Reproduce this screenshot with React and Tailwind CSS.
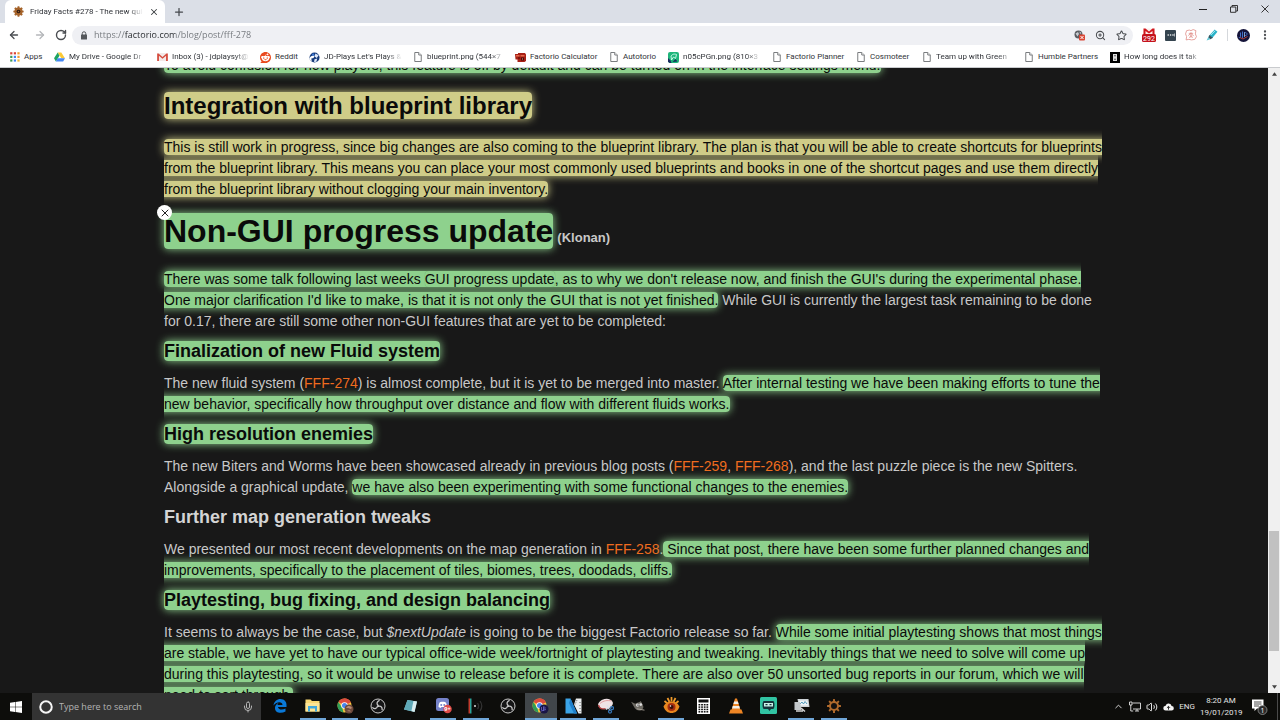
import React from 'react';
import { ArrowLeft, ArrowRight, RotateCw, ZoomIn, Star, Plus, X, MoreVertical, Mic, ChevronUp, Volume2 } from 'lucide-react';
import { SiReddit } from 'react-icons/si';

const CHROME_FONT = "font-['Open_Sans','Noto_Sans',sans-serif]";

function Gear({ className = 'size-3', color = '#a5632a' }) {
  return (
    <svg viewBox="0 0 24 24" className={className} aria-hidden="true">
      <g fill={color}>
        {[0, 45, 90, 135].map((a) => (
          <rect key={a} x="9.8" y="0.8" width="4.4" height="22.4" rx="1" transform={`rotate(${a} 12 12)`} />
        ))}
      </g>
      <circle cx="12" cy="12" r="6.6" fill="none" stroke={color} strokeWidth="4" />
      <circle cx="12" cy="12" r="4" fill="#2a1a12" />
      <circle cx="12" cy="12" r="1.6" fill={color} />
    </svg>
  );
}

function AppsIcon() {
  const colors = ['#db4437', '#db4437', '#f29b34', '#3c9a55', '#4285f4', '#f29b34', '#3c9a55', '#4285f4', '#f2b634'];
  return (
    <svg viewBox="0 0 10 10" className="size-2.5">
      {colors.map((c, i) => (
        <rect key={i} x={(i % 3) * 3.6 + 0.2} y={Math.floor(i / 3) * 3.6 + 0.2} width="2.2" height="2.2" fill={c} />
      ))}
    </svg>
  );
}

function DriveIcon() {
  return (
    <svg viewBox="0 0 24 22" className="w-[11px] h-2.5">
      <path d="M8 1h8l8 13h-8z" fill="#fcc934" />
      <path d="M8 1l4 7L4 21 0 14z" fill="#1ea362" />
      <path d="M8 14h16l-4 7H4z" fill="#4587f4" />
    </svg>
  );
}

function MailIcon() {
  return (
    <svg viewBox="0 0 24 18" className="w-[11px] h-2">
      <rect x="1" y="0" width="22" height="18" rx="1" fill="#f3e9e8" />
      <path d="M0 18V1h3l9 8 9-8h3v17h-4V6l-8 7-8-7v12z" fill="#d54b3d" />
    </svg>
  );
}

function GlobeSwirl() {
  return (
    <svg viewBox="0 0 24 24" className="size-[11px]">
      <circle cx="12" cy="12" r="11" fill="#163a7a" />
      <path d="M1 13c4-5 8-6 11-5l-2 5-5 1 1 6c-3-1-5-4-5-7z" fill="#fff" />
      <path d="M14 3l7 4-4 6-5-3zM12 16l6-2-2 7-5 1z" fill="#dfe9fa" />
      <circle cx="9" cy="6" r="2.5" fill="#3d7bd9" />
    </svg>
  );
}

function PageIcon() {
  return (
    <svg viewBox="0 0 16 20" className="w-2 h-2.5" fill="#fff" stroke="#6b6e72" strokeWidth="1.8">
      <path d="M1.5 1h8L14.5 6v13h-13z" />
      <path d="M9.5 1v5h5" />
    </svg>
  );
}

function CalcIcon() {
  return (
    <svg viewBox="0 0 22 18" className="w-[11px] h-[9px]">
      <path d="M0 2h6V0h14l2 3v13l-3 2H5v-5H1z" fill="#a82015" />
      <path d="M2 4h7v3H2zM11 4h8v3h-8z" fill="#e56a4d" />
      <path d="M6 9h4v2H6zM12 9h6v6h-6z" fill="#4a0b08" />
      <path d="M14 11h2v2h-2z" fill="#e98" />
    </svg>
  );
}

function GreenPicIcon() {
  return (
    <svg viewBox="0 0 22 22" className="size-[11px]">
      <rect width="22" height="22" rx="4" fill="#1fb57a" />
      <path d="M0 12l5 5 2 5H3l-3-3z" fill="#1b2a60" />
      <path d="M6 8c4-5 8-4 11-3l-2 8-4-3-4 6z" fill="none" stroke="#d4fff0" strokeWidth="1.8" />
      <path d="M9 20l6-6 4 5z" fill="#14305a" />
    </svg>
  );
}

function BlackIcon() {
  return (
    <svg viewBox="0 0 20 22" className="w-2.5 h-[11px]">
      <rect width="20" height="22" fill="#000" />
      <path d="M6 4h8v14H6z" fill="#ddd" />
      <path d="M8 6h4l-2 4zM8 16h4l-2-4z" fill="#555" />
    </svg>
  );
}

const bookmarks = [
  { label: 'Apps', icon: <AppsIcon />, width: 'w-[45px]' },
  { label: 'My Drive - Google Dr', icon: <DriveIcon />, width: 'w-[103px]', fade: true },
  { label: 'Inbox (3) - jdplaysyt@', icon: <MailIcon />, width: 'w-[103px]', fade: true },
  { label: 'Reddit', icon: <SiReddit className="size-[11px] text-[#ea4a1f]" />, width: 'w-[49px]' },
  { label: "JD-Plays Let's Plays &", icon: <GlobeSwirl />, width: 'w-[103px]', fade: true },
  { label: 'blueprint.png (544×7', icon: <PageIcon />, width: 'w-[103px]', fade: true },
  { label: 'Factorio Calculator', icon: <CalcIcon />, width: 'w-[93px]' },
  { label: 'Autotorio', icon: <PageIcon />, width: 'w-[60px]' },
  { label: 'n05cPGn.png (810×3', icon: <GreenPicIcon />, width: 'w-[103px]', fade: true },
  { label: 'Factorio Planner', icon: <PageIcon />, width: 'w-[84px]' },
  { label: 'Cosmoteer', icon: <PageIcon />, width: 'w-[66px]' },
  { label: 'Team up with Green', icon: <PageIcon />, width: 'w-[102px]', fade: true },
  { label: 'Humble Partners', icon: <PageIcon />, width: 'w-[86px]' },
  { label: 'How long does it tak', icon: <BlackIcon />, width: 'w-[103px]', fade: true },
];

function TabStrip() {
  return (
    <div className="flex h-[23px] shrink-0 items-stretch bg-[#dbdfe7]">
      <div className="ml-[5px] flex w-40 items-center gap-1.5 rounded-t-md bg-white pl-2 pr-1.5">
        <Gear className="size-[11px] shrink-0" />
        <span className="min-w-0 flex-1 whitespace-nowrap mask-r-from-88% font-['Roboto','Noto_Sans',sans-serif] text-[8px] leading-4 text-[#303338]">
          Friday Facts #278 - The new quic
        </span>
        <button aria-label="Close tab" className="text-[#3c4043]"><X className="size-2.5" strokeWidth={2.5} /></button>
      </div>
      <button aria-label="New tab" className="ml-2 self-center text-[#45484d]"><Plus className="size-3" strokeWidth={2.5} /></button>
      <div className="ml-auto flex h-[18px] text-[#222]">
        <button aria-label="Minimize" className="grid w-[31px] place-items-center">
          <svg viewBox="0 0 8 8" className="size-2"><path d="M0 4.500h8" stroke="currentColor" /></svg>
        </button>
        <button aria-label="Restore" className="grid w-[31px] place-items-center">
          <svg viewBox="0 0 8 8" className="size-2" fill="none" stroke="currentColor" strokeWidth="0.9"><path d="M.5 2h5.300v5.300H.5zM2 2V.5h5.500V6H6" /></svg>
        </button>
        <button aria-label="Close" className="grid w-[31px] place-items-center">
          <svg viewBox="0 0 8 8" className="size-2" fill="none" stroke="currentColor" strokeWidth="0.9"><path d="M.5.5l7 7M7.500.5l-7 7" /></svg>
        </button>
      </div>
    </div>
  );
}

function Toolbar() {
  return (
    <div className="flex h-6 shrink-0 items-center bg-white pl-2 text-[#4a4d51]">
      <button aria-label="Back" className="grid w-[21px] justify-start"><ArrowLeft className="size-3" strokeWidth={2.6} /></button>
      <button aria-label="Forward" className="grid w-[21px] justify-center text-[#b5b7ba]"><ArrowRight className="size-3" strokeWidth={2.6} /></button>
      <button aria-label="Reload" className="grid w-[22px] justify-center"><RotateCw className="size-3" strokeWidth={2.8} /></button>
      <div className="flex h-[19px] flex-1 items-center rounded-full bg-[#eff0f4] pl-2 pr-1.5">
        <svg viewBox="0 0 16 18" className="h-[9px] w-2"><rect x="2" y="7" width="12" height="10" rx="1" fill="#55585c" /><path d="M4.500 8V5a3.500 3.500 0 0 1 7 0v3" fill="none" stroke="#55585c" strokeWidth="2" /></svg>
        <input
          aria-label="Address"
          defaultValue="https://factorio.com/blog/post/fff-278"
          className="ml-1.5 min-w-0 flex-1 bg-[linear-gradient(90deg,#72767b_31px,#25282c_31px,#25282c_81px,#72767b_81px)] bg-clip-text text-[9px] leading-4 text-transparent outline-none"
        />
        <div className="flex items-center gap-[10px]">
          <button aria-label="Blocked content">
            <svg viewBox="0 0 22 22" className="size-[11px]">
              <circle cx="9" cy="9" r="8" fill="#5a5d62" />
              <path d="M3 7l5-3 2 4-3 5zM11 3l4 3-3 2z" fill="#c9ccd1" />
              <rect x="10" y="9" width="12" height="12" rx="2" fill="#db4634" />
              <path d="M13 12l6 6m0-6l-6 6" stroke="#fff" strokeWidth="2" />
            </svg>
          </button>
          <button aria-label="Zoom"><ZoomIn className="size-[11px]" strokeWidth={2.2} /></button>
          <button aria-label="Bookmark this page"><Star className="size-[11px]" strokeWidth={2.2} /></button>
        </div>
      </div>
      <div className="flex w-[147px] items-center justify-between px-[9px]">
        <button aria-label="Mail, 292 unread">
          <svg viewBox="0 0 28 28" className="size-3.5">
            <path d="M3 1h22v12H3z" fill="#fbeceb" />
            <path d="M3 1h4l7 6 7-6h4v12h-4V6l-7 5-7-5v7H3z" fill="#d0161d" />
            <rect x="0" y="12" width="28" height="16" rx="3" fill="#c4121b" />
            <text x="14" y="25" fontSize="14" fill="#fff" textAnchor="middle" fontFamily="Roboto">292</text>
          </svg>
        </button>
        <button aria-label="Password manager" className="grid size-[11px] place-items-center rounded-[1px] bg-[#35444f]">
          <svg viewBox="0 0 20 8" className="h-1 w-2" fill="#fff"><circle cx="3" cy="4" r="2" /><circle cx="9" cy="4" r="2" /><circle cx="15" cy="4" r="2" /><path d="M18 0h1.500v8H18z" /></svg>
        </button>
        <button aria-label="Stamp">
          <svg viewBox="0 0 22 22" className="size-3" fill="none" stroke="#e08f89" strokeWidth="1.500"><path d="M3 3l5-1 3 1 4-2 5 2-1 6 2 5-3 5-6 1-5-1-5 1 1-6-2-5z" /><path d="M7 8h8M6 12l5-4 5 5M8 16l3-4 3 4M11 6v10" /></svg>
        </button>
        <button aria-label="Highlighter">
          <svg viewBox="0 0 22 22" className="size-3"><path d="M6 12L16 1l5 4-9 11z" fill="#2bb3c9" /><path d="M6 11l7 5-5 3-4-3z" fill="#35545f" /><path d="M4 15l4 4-7 2z" fill="#5fc8d6" /><path d="M9 11l8-8" stroke="#c9f4fa" strokeWidth="1.500" /></svg>
        </button>
        <span className="h-3 w-px bg-[#d5d8dc]" />
        <button aria-label="Profile">
          <svg viewBox="0 0 26 26" className="size-[13px]"><circle cx="13" cy="13" r="13" fill="#15143a" /><path d="M7 7v8c0 3-3 3-3 1M11 5v13M14 7c8-1 8 7 1 6" fill="none" stroke="#4a7bd8" strokeWidth="1.800" /><path d="M6 17l6 3 9-5" stroke="#c5483f" strokeWidth="1.800" fill="none" /><path d="M15 7v9" stroke="#a9c8e8" strokeWidth="1.500" /></svg>
        </button>
        <button aria-label="Menu"><MoreVertical className="size-3" strokeWidth={2.6} /></button>
      </div>
    </div>
  );
}

function BookmarksBar() {
  return (
    <nav aria-label="Bookmarks" className="flex h-[21px] shrink-0 items-center overflow-hidden border-b border-[#c9cbce] bg-white pl-[9px]">
      {bookmarks.map((b) => (
        <a key={b.label} href="#" className={`flex shrink-0 items-center gap-1 pr-2.5 ${b.width}`}>
          <span className="grid w-[11px] shrink-0 place-items-center">{b.icon}</span>
          <span className={`min-w-0 flex-1 whitespace-nowrap font-['Roboto','Noto_Sans',sans-serif] text-[8px] leading-4 text-[#303338] ${b.fade ? 'mask-r-from-80%' : ''}`}>{b.label}</span>
        </a>
      ))}
    </nav>
  );
}

function Mark({ tone = 'green', children }) {
  const tones = {
    green: 'bg-[#8ed18d] shadow-[0_0_8px_#8ed18d]',
    yellow: 'bg-[#cfcc88] shadow-[0_0_8px_#cfcc88]',
  };
  return <mark className={`rounded-[4px] text-[#0a0a0a] ${tones[tone]}`}>{children}</mark>;
}

function PostLink({ children }) {
  return <a href="#" className="text-[#ef6c1f]">{children}</a>;
}

function Section({ title, marked = true, children }) {
  return (
    <section className="mt-[7px]">
      <h3 className="mb-2.5 text-[18px] font-bold leading-6 text-[#d4d4d4]">{marked ? <Mark>{title}</Mark> : title}</h3>
      <p>{children}</p>
    </section>
  );
}

function Article() {
  return (
    <article className="mx-auto -mt-[13px] max-w-[940px] font-['Liberation_Sans',Arial,sans-serif] text-[14px] leading-[21px] text-[#c8c8c8]">
      <p><Mark>To avoid confusion for new players, this feature is off by default and can be turned on in the interface settings menu.</Mark></p>
      <h2 className="mb-4 mt-[15px] text-[24px] font-bold leading-[30px]"><Mark tone="yellow">Integration with blueprint library</Mark></h2>
      <p>
        <Mark tone="yellow">
          This is still work in progress, since big changes are also coming to the blueprint library. The plan is that you will be able to create shortcuts for blueprints from the blueprint library. This means you can place your most commonly used blueprints and books in one of the shortcut pages and use them directly from the blueprint library without clogging your main inventory.
        </Mark>
      </p>
      <div className="mb-5 mt-[13px] flex items-baseline gap-1">
        <h1 className="relative text-[32px] font-bold leading-9">
          <Mark>Non-GUI progress update</Mark>
          <button aria-label="Remove highlight" className="absolute -left-[7px] -top-2 grid size-[15px] place-items-center rounded-full bg-white text-[#222]">
            <X className="size-3" strokeWidth={2} />
          </button>
        </h1>
        <span className="text-[13px] font-bold">(Klonan)</span>
      </div>
      <p>
        <Mark>
          There was some talk following last weeks <a href="#" className="rounded-[4px] shadow-[0_0_1px_#5f9f5e]">GUI progress update</a>, as to why we don't release now, and finish the GUI's during the experimental phase. One major clarification I'd like to make, is that it is not only the GUI that is not yet finished.
        </Mark>{' '}
        While GUI is currently the largest task remaining to be done for 0.17, there are still some other non-GUI features that are yet to be completed:
      </p>
      <Section title="Finalization of new Fluid system">
        The new fluid system (<PostLink>FFF-274</PostLink>) is almost complete, but it is yet to be merged into master.{' '}
        <Mark>After internal testing we have been making efforts to tune the new behavior, specifically how throughput over distance and flow with different fluids works.</Mark>
      </Section>
      <Section title="High resolution enemies">
        The new Biters and Worms have been showcased already in previous blog posts (<PostLink>FFF-259</PostLink>, <PostLink>FFF-268</PostLink>), and the last puzzle piece is the new Spitters. Alongside a graphical update,{' '}
        <Mark>we have also been experimenting with some functional changes to the enemies.</Mark>
      </Section>
      <Section title="Further map generation tweaks" marked={false}>
        We presented our most recent developments on the map generation in <PostLink>FFF-258</PostLink>.
        <Mark> Since that post, there have been some further planned changes and improvements, specifically to the placement of tiles, biomes, trees, doodads, cliffs.</Mark>
      </Section>
      <Section title="Playtesting, bug fixing, and design balancing">
        It seems to always be the case, but <em>$nextUpdate</em> is going to be the biggest Factorio release so far.{' '}
        <Mark>While some initial playtesting shows that most things are stable, we have yet to have our typical office-wide week/fortnight of playtesting and tweaking. Inevitably things that we need to solve will come up during this playtesting, so it would be unwise to release before it is complete. There are also over 50 unsorted bug reports in our forum, which we will need to sort through.</Mark>
      </Section>
    </article>
  );
}

function Scrollbar() {
  return (
    <div className="flex w-3 shrink-0 flex-col items-center bg-[#f0f0f0] py-1 text-[#444]">
      <svg viewBox="0 0 6 4" className="h-1 w-[5px] shrink-0"><path d="M3 0l3 4H0z" fill="currentColor" /></svg>
      <div className="grow-[455]" />
      <div className="w-2.5 grow-[120] bg-[#c1c1c1]" />
      <div className="grow-[34]" />
      <svg viewBox="0 0 6 4" className="h-1 w-[5px] shrink-0"><path d="M3 4l3-4H0z" fill="currentColor" /></svg>
    </div>
  );
}

function ChromeLogo({ badge }) {
  return (
    <svg viewBox="0 0 34 32" className="h-4 w-[17px]">
      <circle cx="15" cy="15" r="14" fill="#f5c73d" />
      <path d="M15 15L2.900 8A14 14 0 0 1 27.600 9z" fill="#dd4b3e" />
      <path d="M15 1a14 14 0 0 1 12.600 8H15z" fill="#dd4b3e" />
      <path d="M2.900 8L11 21l2 8A14 14 0 0 1 2.900 8z" fill="#2f9d58" />
      <circle cx="15" cy="15" r="6.500" fill="#fff" />
      <circle cx="15" cy="15" r="5" fill="#4684ee" />
      <circle cx="24" cy="22" r="9" fill={badge === 'photo' ? '#6e4a3c' : '#191545'} />
      {badge === 'photo' ? (
        <path d="M18 20c3-6 10-5 12 0l-3 2-4-2zM20 26c3-2 6-2 8 1" fill="#b98b74" />
      ) : (
        <path d="M19 18v6M23 17v9M23 18c5 0 5 4 0 4M18 26l10-3" stroke="#6f6bd0" strokeWidth="1.500" fill="none" />
      )}
    </svg>
  );
}

function ObsLogo() {
  return (
    <svg viewBox="0 0 32 32" className="size-4">
      <circle cx="16" cy="16" r="14" fill="#161617" stroke="#c8c8c8" strokeWidth="2" />
      {[30, 150, 270].map((a) => (
        <path key={a} d="M16 15C11 14.500 9.500 9.500 12.500 5.500" fill="none" stroke="#c8c8c8" strokeWidth="2.600" strokeLinecap="round" transform={`rotate(${a} 16 16)`} />
      ))}
    </svg>
  );
}

const taskItems = [
  { name: 'Edge', icon: <svg viewBox="0 0 28 28" className="size-3.5"><path d="M1 13C2 5 8 0 15 0c8 0 12 6 12 12v4H10c0 5 8 7 15 3v6C16 30 4 28 4 18c0-5 3-8 7-10-1 1-2 3-2 4h10c0-7-11-8-18 1z" fill="#0a79d8" /></svg> },
  { name: 'File Explorer', open: true, icon: <svg viewBox="0 0 30 26" className="h-[13px] w-[15px]"><path d="M1 1h10l3 3h15v21H1z" fill="#f7d774" /><path d="M1 8h28v17H1z" fill="#fbe596" /><path d="M6 25V14h18v11h-4v-6H10v6z" fill="#3fa7dc" /></svg> },
  { name: 'Chrome', open: true, icon: <ChromeLogo badge="photo" /> },
  { name: 'OBS Studio', open: true, icon: <ObsLogo /> },
  { name: 'Notepad', icon: <svg viewBox="0 0 30 28" className="h-3.5 w-[15px]"><path d="M9 2l19 3-5 21L2 21z" fill="#8ec9d4" /><path d="M9 2l12 2-4 20L2 21z" fill="#5fa9b8" /><path d="M21 4l7 1-5 21-6-2z" fill="#d9edf0" /></svg> },
  { name: 'Discord', open: true, icon: <svg viewBox="0 0 34 34" className="size-[17px]"><rect x="2" y="2" width="26" height="26" rx="5" fill="#7582c9" /><path d="M7 20c0-6 2-10 4-10 3-1 6-1 9 0 2 0 4 5 4 10l-4 2-2-2h-5l-2 2z" fill="#fff" /><circle cx="12.500" cy="16" r="2" fill="#7582c9" /><circle cx="18.500" cy="16" r="2" fill="#7582c9" /><circle cx="25" cy="24" r="8.500" fill="#de4b4b" /><text x="25" y="28" fontSize="11" fontWeight="bold" fill="#fff" textAnchor="middle" fontFamily="Open Sans">9+</text></svg> },
  { name: 'Audio Router', open: true, icon: <svg viewBox="0 0 32 32" className="size-4"><path d="M1 1h3v30H1z" fill="#c0392b" /><path d="M4 1h3v30H4z" fill="#2aa198" /><circle cx="14" cy="16" r="2" fill="#ddd" /><path d="M19 10c3 4 3 8 0 12M24 6c5 7 5 13 0 20" stroke="#333" strokeWidth="2.500" fill="none" /></svg> },
  { name: 'OBS', icon: <ObsLogo /> },
  { name: 'Chrome profile', open: true, active: true, icon: <ChromeLogo badge="avatar" /> },
  { name: 'Media Editor', open: true, icon: <svg viewBox="0 0 34 32" className="h-4 w-[17px]"><path d="M1 1h10l13 30H1z" fill="#3aa3e6" /><path d="M11 1l13 30h-6L8 10z" fill="#1f7fcb" /><path d="M22 1h11v30h-6L18 13z" fill="#eceff0" /><path d="M24 4l-4 9M28 4v0M30 8v2M30 14v2M30 20v2M30 26v2" stroke="#444" strokeWidth="1.500" strokeDasharray="2 2" /></svg> },
  { name: 'Snipping Tool', open: true, icon: <svg viewBox="0 0 34 32" className="h-4 w-[17px]"><ellipse cx="17" cy="12" rx="15" ry="10" fill="#efe2e4" transform="rotate(-12 17 12)" /><path d="M3 14c2 8 8 9 14 7" stroke="#b03b3b" strokeWidth="2.500" fill="none" /><path d="M6 11c7-6 15-7 23-5" stroke="#d88" strokeWidth="1.500" fill="none" /><path d="M20 14l6 12M30 17l-12 6" stroke="#d7e2ee" strokeWidth="2" /><circle cx="26" cy="27" r="3" fill="none" stroke="#3576b8" strokeWidth="2.500" /><circle cx="30" cy="20" r="3" fill="none" stroke="#3576b8" strokeWidth="2.500" /></svg> },
  { name: 'GIMP', icon: <svg viewBox="0 0 34 26" className="h-3 w-4"><path d="M2 4l9 4c4-3 9-2 12-6l4 8c3 5 2 10-3 12-6 2-13-1-16-8z" fill="#6d6a63" /><circle cx="16" cy="11" r="3.500" fill="#ddd" /><circle cx="23" cy="10" r="3" fill="#ddd" /><circle cx="17" cy="11" r="1.500" fill="#111" /><path d="M14 19l17 3" stroke="#a9a39a" strokeWidth="2" /></svg> },
  { name: 'Image Viewer', open: true, icon: <svg viewBox="0 0 34 34" className="size-[17px]"><path d="M3 8l6 5M9 2l4 8M17 0v9M25 2l-4 8M31 8l-6 5" stroke="#ef9a2b" strokeWidth="3.500" /><path d="M1 19c4-8 10-10 16-10s12 2 16 10c-3 9-9 13-16 13S4 28 1 19z" fill="#e8871f" /><circle cx="17" cy="20" r="8" fill="#a52d10" /><circle cx="17" cy="20" r="4" fill="#38100a" /><circle cx="15" cy="18" r="1.500" fill="#fff" /></svg> },
  { name: 'Calculator', icon: <svg viewBox="0 0 26 32" className="h-4 w-[13px]"><path d="M0 0h26v32H0z" fill="#fff" /><path d="M3 3h20v6H3z" fill="#111" />{[0, 1, 2, 3].flatMap((r) => [0, 1, 2, 3].map((c) => <rect key={`${r}${c}`} x={3 + c * 5.3} y={12 + r * 4.7} width="3.500" height="3" fill="#111" />))}</svg> },
  { name: 'VLC', icon: <svg viewBox="0 0 28 32" className="h-4 w-3.5"><path d="M12 1h4l7 23H5z" fill="#ee8524" /><path d="M10.300 7h7.400l1.500 5H8.800zM7.500 16h13l1.300 5H6.200z" fill="#f3efe9" /><path d="M3 23h22l3 8H0z" fill="#ee8524" /></svg> },
  { name: 'Chat Bot', icon: <svg viewBox="0 0 34 34" className="size-[17px]"><rect width="34" height="34" rx="3" fill="#31c3a2" /><path d="M8 8h18c4 0 4 16 0 16h-4l-3 4-3-4H8c-4 0-4-16 0-16z" fill="#16313a" /><path d="M8 12h18v7H8z" fill="#c9f1e8" /><path d="M11 15h4M19 15h4" stroke="#16313a" strokeWidth="2.500" /></svg> },
  { name: 'Task Manager', open: true, icon: <svg viewBox="0 0 34 30" className="h-[15px] w-[17px]"><path d="M9 2h22l2 16H12z" fill="#cdd3d6" /><path d="M12 5h17l1 10H14z" fill="#edf4f7" /><path d="M14 12l4-4 3 4 3-5 4 5" stroke="#4693b5" strokeWidth="1.800" fill="none" /><path d="M3 8h11l3 16H3z" fill="#c3c8cb" /><path d="M6 26h14M16 20l8 7" stroke="#d5d5d5" strokeWidth="3" /></svg> },
  { name: 'Factorio', open: true, icon: <svg viewBox="0 0 32 32" className="size-4"><g fill="#b06a2c">{[0, 45, 90, 135].map((a) => <rect key={a} x="14" y="2" width="4" height="28" rx="1" transform={`rotate(${a} 16 16)`} />)}</g><circle cx="16" cy="16" r="8" fill="#151210" stroke="#b06a2c" strokeWidth="4" /></svg> },
];

function Taskbar() {
  return (
    <footer className={`flex h-[27px] shrink-0 items-stretch bg-[#0d0d0b] text-[#e4e4e4] ${CHROME_FONT}`}>
      <button aria-label="Start" className="grid w-8 shrink-0 place-items-center">
        <svg viewBox="0 0 24 24" className="size-3" fill="#fff"><path d="M0 3.500l10-1.400V11.500H0zM11 2l13-2v11.500H11zM0 12.500h10v9.400L0 20.500zM11 12.500h13V24l-13-2z" /></svg>
      </button>
      <label className="flex w-[229px] shrink-0 items-center gap-1.5 bg-[#333] px-[7px]">
        <svg viewBox="0 0 28 28" className="size-3.5 shrink-0"><circle cx="14" cy="14" r="11.500" fill="none" stroke="#f5f5f5" strokeWidth="4" /></svg>
        <input aria-label="Search" placeholder="Type here to search" className="min-w-0 flex-1 bg-transparent text-[9px] leading-4 outline-none placeholder:text-[#b4b4b4]" />
        <Mic className="size-3 shrink-0 text-[#b5b5b5]" />
      </label>
      <div className="ml-[3px] flex w-[586px] min-w-0">
        {taskItems.map((t) => (
          <button key={t.name} aria-label={t.name} className={`flex min-w-0 flex-1 flex-col items-center ${t.active ? 'bg-[#41464a]' : ''}`}>
            <span className="grid flex-1 place-items-center">{t.icon}</span>
            <span className={`h-0.5 ${t.active ? 'w-full' : 'w-[26px]'} ${t.open ? 'bg-[#6fa6d8]' : ''}`} />
          </button>
        ))}
      </div>
      <div className="ml-auto flex shrink-0 items-center gap-[5px]">
        <ChevronUp className="size-[11px]" />
        <svg viewBox="0 0 24 22" className="h-[11px] w-3" fill="none" stroke="currentColor" strokeWidth="1.800"><path d="M7 4h16v12H8M12 20h8M16 16v4M1 2h5v6H1zM3.500 8v12h5" /></svg>
        <Volume2 className="size-3" />
        <svg viewBox="0 0 24 18" className="h-2 w-[11px]"><path d="M6 17a5.500 5.500 0 0 1-.5-11A7 7 0 0 1 19 7a5 5 0 0 1 0 10z" fill="#f4f4f4" /><path d="M12 15V8M8.500 11L12 7.500 15.500 11" stroke="#111" strokeWidth="2" fill="none" /></svg>
        <span className="font-['Roboto','Noto_Sans',sans-serif] text-[8px] leading-4">ENG</span>
        <time dateTime="2019-01-19T08:20" className="w-[42px] text-center font-['Roboto','Noto_Sans',sans-serif] text-[8px] leading-3">
          8:20 AM<br />19/01/2019
        </time>
        <button aria-label="1 notification" className="ml-1 mr-1">
          <svg viewBox="0 0 34 34" className="size-[17px]"><path d="M2 3h23v18H12l-5 5v-5H2z" fill="#fff" /><path d="M6 8h15M6 12h15M6 16h10" stroke="#111" strokeWidth="1.500" /><circle cx="23" cy="24" r="9" fill="#2a2a2a" stroke="#999" strokeWidth="1.500" /><text x="23" y="29" fontSize="14" fill="#fff" textAnchor="middle" fontFamily="Open Sans">1</text></svg>
        </button>
        <span className="mr-0.5 h-[27px] w-px bg-[#4a4a4a]" />
      </div>
    </footer>
  );
}

export default function App() {
  return (
    <div className="flex h-screen flex-col overflow-hidden bg-[#181818]">
      <header className={`shrink-0 ${CHROME_FONT}`}>
        <TabStrip />
        <Toolbar />
        <BookmarksBar />
      </header>
      <div className="flex min-h-0 flex-1">
        <main className="min-w-0 flex-1 overflow-hidden bg-[#181818]"><Article /></main>
        <Scrollbar />
      </div>
      <Taskbar />
    </div>
  );
}
